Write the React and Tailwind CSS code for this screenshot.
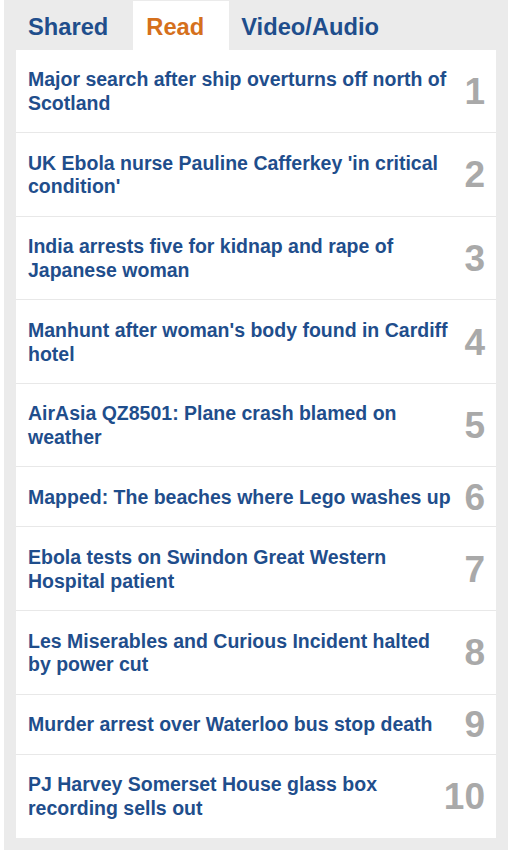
import React from "react";

const items = [
  "Major search after ship overturns off north of Scotland",
  "UK Ebola nurse Pauline Cafferkey 'in critical condition'",
  "India arrests five for kidnap and rape of Japanese woman",
  "Manhunt after woman's body found in Cardiff hotel",
  "AirAsia QZ8501: Plane crash blamed on weather",
  "Mapped: The beaches where Lego washes up",
  "Ebola tests on Swindon Great Western Hospital patient",
  "Les Miserables and Curious Incident halted by power cut",
  "Murder arrest over Waterloo bus stop death",
  "PJ Harvey Somerset House glass box recording sells out",
];

export default function App() {
  return (
    <div className="min-h-[866px] bg-white" style={{ fontFamily: '"Liberation Sans", Arial, sans-serif' }}>
      <div className="ml-[4px] w-[504px] bg-[#ebebeb] pt-[1px] pb-[12px] px-[12px]">
        <div className="flex h-[48.5px]">
          <div className="flex items-center pt-[6px] pl-[12px] pr-[25px] text-[23.7px] font-bold text-[#1f4e8c]">Shared</div>
          <div className="flex items-center pt-[6px] bg-white pl-[13px] pr-[25px] text-[23.7px] font-bold text-[#d5701c]">Read</div>
          <div className="flex items-center pt-[6px] pl-[12px] pr-[25px] text-[23.7px] font-bold text-[#1f4e8c]">Video/Audio</div>
        </div>
        <ol className="bg-white">
          {items.map((t, i) => (
            <li
              key={i}
              className={`flex items-center pl-[12px] pr-[11px] pt-[18.5px] pb-[16.5px] ${i < items.length - 1 ? "border-b border-[#e8e8e8]" : "pb-[17.5px]"}`}
            >
              <div className="flex-1 min-w-0 text-[19.5px] leading-[23.8px] font-bold text-[#1f4e8c]">{t}</div>
              <div className="flex w-[30px] shrink-0 justify-end text-[37px] leading-[24px] font-bold text-[#a9a9a9]">
                {i + 1}
              </div>
            </li>
          ))}
        </ol>
      </div>
    </div>
  );
}
